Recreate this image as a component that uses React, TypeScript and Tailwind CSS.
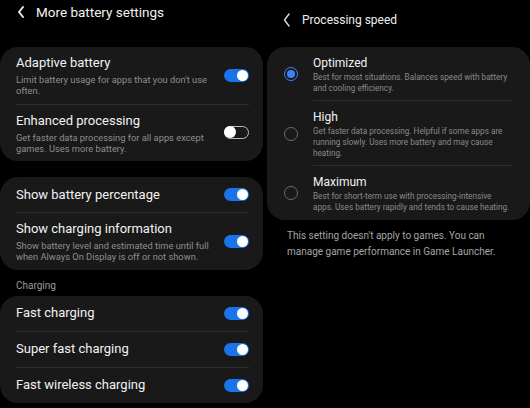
import React from "react";

const font = { fontFamily: "Roboto, 'Noto Sans', Arial, sans-serif" };

function Toggle({ on }: { on: boolean }) {
  if (on) {
    return (
      <div className="relative h-[13px] w-[25px] shrink-0 rounded-full bg-[#1a73e8]">
        <div className="absolute right-[1px] top-[1px] h-[11px] w-[11px] rounded-full bg-white" />
      </div>
    );
  }
  return (
    <div className="relative h-[13px] w-[25px] shrink-0 rounded-full border-[1.5px] border-[#bdbdbd]">
      <div className="absolute left-[-1px] top-[-1px] h-[12px] w-[12px] rounded-full bg-white" />
    </div>
  );
}

function Radio({ on }: { on: boolean }) {
  if (on) {
    return (
      <div className="flex h-[14px] w-[14px] shrink-0 items-center justify-center rounded-full border-[1.5px] border-[#3e82f7]">
        <div className="h-[8px] w-[8px] rounded-full bg-[#3e82f7]" />
      </div>
    );
  }
  return <div className="h-[14px] w-[14px] shrink-0 rounded-full border-[1.5px] border-[#6b6b6b]" />;
}

type Row = { title: string; sub?: string; on: boolean };

function SwitchRow({ row, last }: { row: Row; last?: boolean }) {
  return (
    <div className="pl-[16px] pr-[14px]">
      <div className={row.sub ? "flex items-center pt-[7px] pb-[7.5px]" : "flex items-center py-[8.5px]"}>
        <div className="flex-1 pr-[10px]">
          <div className="text-[13px] leading-[18px] text-[#f2f2f2]">{row.title}</div>
          {row.sub && (
            <div className="mt-[2px] text-[9.3px] leading-[11px] text-[#8e8e8e]">{row.sub}</div>
          )}
        </div>
        <Toggle on={row.on} />
      </div>
      {!last && <div className="h-px bg-[#2e2e2e]" />}
    </div>
  );
}

export default function App() {
  const card1: Row[] = [
    { title: "Adaptive battery", sub: "Limit battery usage for apps that you don't use often.", on: true },
    { title: "Enhanced processing", sub: "Get faster data processing for all apps except games. Uses more battery.", on: false },
  ];
  const card2: Row[] = [
    { title: "Show battery percentage", on: true },
    {
      title: "Show charging information",
      sub: "Show battery level and estimated time until full when Always On Display is off or not shown.",
      on: true,
    },
  ];
  const card3: Row[] = [
    { title: "Fast charging", on: true },
    { title: "Super fast charging", on: true },
    { title: "Fast wireless charging", on: true },
  ];
  const speeds = [
    { title: "Optimized", sub: "Best for most situations. Balances speed with battery and cooling efficiency.", on: true },
    {
      title: "High",
      sub: "Get faster data processing. Helpful if some apps are running slowly. Uses more battery and may cause heating.",
      on: false,
    },
    {
      title: "Maximum",
      sub: "Best for short-term use with processing-intensive apps. Uses battery rapidly and tends to cause heating.",
      on: false,
    },
  ];

  return (
    <div className="flex h-[408px] w-[530px] gap-[4px] overflow-hidden bg-black" style={font}>
      {/* left screen */}
      <div className="w-[263px] shrink-0">
        <div className="flex h-[47px] items-start gap-[10px] pl-[16px] pt-[3px]">
          <svg width="10" height="16" viewBox="0 0 10 16" className="mt-[1px]">
            <path d="M7 3 L3 8 L7 13" stroke="#eee" strokeWidth="2" fill="none" strokeLinecap="round" strokeLinejoin="round" />
          </svg>
          <span className="text-[13.5px] leading-[18px] text-[#f2f2f2]">More battery settings</span>
        </div>

        <div className="rounded-[18px] bg-[#191919]">
          {card1.map((r, i) => (
            <SwitchRow key={r.title} row={r} last={i === card1.length - 1} />
          ))}
        </div>

        <div className="mt-[16px] rounded-[18px] bg-[#191919]">
          {card2.map((r, i) => (
            <SwitchRow key={r.title} row={r} last={i === card2.length - 1} />
          ))}
        </div>

        <div className="pl-[16px] pt-[10px] pb-[4px] text-[10px] leading-[12px] text-[#9a9a9a]">Charging</div>

        <div className="rounded-[18px] bg-[#191919]">
          {card3.map((r, i) => (
            <SwitchRow key={r.title} row={r} last={i === card3.length - 1} />
          ))}
        </div>
      </div>

      {/* right screen */}
      <div className="flex-1">
        <div className="flex h-[47px] items-start gap-[10px] pl-[15px] pt-[11px]">
          <svg width="10" height="16" viewBox="0 0 10 16" className="mt-[1px]">
            <path d="M7 2 L2.5 8 L7 14" stroke="#ddd" strokeWidth="1.4" fill="none" strokeLinecap="round" strokeLinejoin="round" />
          </svg>
          <span className="text-[12px] leading-[18px] text-[#eeeeee]">Processing speed</span>
        </div>

        <div className="rounded-[18px] bg-[#191919] pb-[1px]">
          {speeds.map((s, i) => (
            <div key={s.title} className="flex items-center">
              <div className="flex w-[46px] shrink-0 justify-center pl-[2px]">
                <Radio on={s.on} />
              </div>
              <div className="flex-1 pr-[17px]">
                <div className="pt-[9px] pb-[6px]">
                  <div className="text-[12px] leading-[15px] text-[#f2f2f2]">{s.title}</div>
                  <div className="mt-[1px] text-[8.2px] leading-[11px] text-[#8a8a8a]">{s.sub}</div>
                </div>
                {i < speeds.length - 1 && <div className="h-px bg-[#2e2e2e]" />}
              </div>
            </div>
          ))}
        </div>

        <div className="pl-[20px] pr-[14px] pt-[8px] text-[10px] leading-[16px] text-[#a5a5a5]">
          This setting doesn't apply to games. You can manage game performance in Game Launcher.
        </div>
      </div>
    </div>
  );
}
